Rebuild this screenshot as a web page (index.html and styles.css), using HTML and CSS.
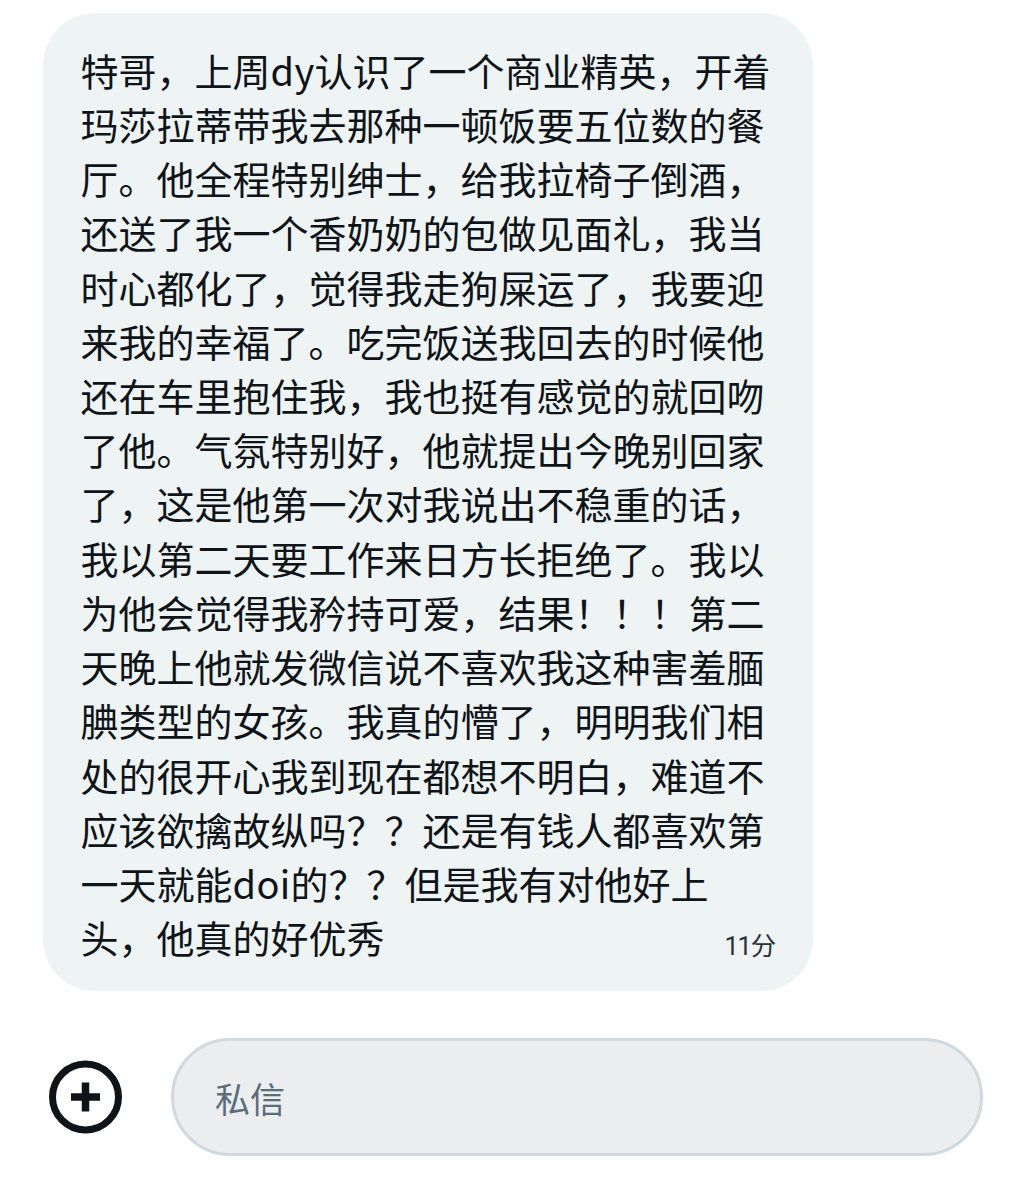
FILE: index.html
```html
<!DOCTYPE html>
<html lang="zh-CN">
<head>
    <meta charset="UTF-8">
    <meta name="viewport" content="width=device-width, initial-scale=1.0">
    <title>私信</title>
    <link rel="stylesheet" href="styles.css">
</head>
<body>
    <div class="chat">
        <div class="message">
            <p class="message-text">
                特哥，上周<span class="latin">dy</span>认识了一个商业精英，开着<br>
                玛莎拉蒂带我去那种一顿饭要五位数的餐<br>
                厅。他全程特别绅士，给我拉椅子倒酒，<br>
                还送了我一个香奶奶的包做见面礼，我当<br>
                时心都化了，觉得我走狗屎运了，我要迎<br>
                来我的幸福了。吃完饭送我回去的时候他<br>
                还在车里抱住我，我也挺有感觉的就回吻<br>
                了他。气氛特别好，他就提出今晚别回家<br>
                了，这是他第一次对我说出不稳重的话，<br>
                我以第二天要工作来日方长拒绝了。我以<br>
                为他会觉得我矜持可爱，结果！！！第二<br>
                天晚上他就发微信说不喜欢我这种害羞腼<br>
                腆类型的女孩。我真的懵了，明明我们相<br>
                处的很开心我到现在都想不明白，难道不<br>
                应该欲擒故纵吗？？还是有钱人都喜欢第<br>
                一天就能<span class="latin">doi</span>的？？但是我有对他好上<br>
                头，他真的好优秀
            </p>
            <span class="message-time">11分</span>
        </div>
        <div class="composer">
            <button class="add-btn" aria-label="添加">
                <svg width="74" height="74" viewBox="0 0 74 74">
                    <circle cx="37.5" cy="37" r="33" fill="none" stroke="#0f1419" stroke-width="7"/>
                    <path d="M37.5 22.5v29M23 37h29" stroke="#0f1419" stroke-width="7.5"/>
                </svg>
            </button>
            <input class="message-input" type="text" placeholder="私信">
        </div>
    </div>
</body>
</html>
```

FILE: styles.css
```css
* {
    box-sizing: border-box;
}
body {
    margin: 0;
    background-color: #fff;
    font-family: "Noto Sans CJK SC", sans-serif;
    color: #0f1419;
}
.chat {
    padding: 13px 35px 0 43px;
}
.message {
    display: flex;
    align-items: flex-end;
    justify-content: space-between;
    width: 770px;
    height: 978px;
    padding: 30px 38px 26.6px 37.5px;
    background-color: #eef3f4;
    border-radius: 52px;
}
.message-text {
    flex: none;
    margin: 0;
    font-size: 38px;
    line-height: 54.22px;
    white-space: nowrap;
}
.latin {
    letter-spacing: 0.3px;
}
.message-time {
    width: 0;
    direction: rtl;
    font-family: Roboto, "Noto Sans CJK SC", sans-serif;
    font-size: 25.5px;
    line-height: 36px;
    letter-spacing: -1.2px;
    white-space: nowrap;
    color: #28323b;
}
.composer {
    display: flex;
    align-items: center;
    gap: 48px;
    margin-top: 47px;
}
.add-btn {
    display: block;
    width: 80px;
    height: 74px;
    padding: 0 0 0 5px;
    border: none;
    background: none;
}
.add-btn svg {
    display: block;
}
.message-input {
    flex: 1;
    min-width: 0;
    height: 118px;
    padding: 0 41px;
    border: 3px solid #d0d9e0;
    border-radius: 59px;
    background-color: #ebedef;
    font-family: inherit;
    font-size: 35px;
}
.message-input::placeholder {
    color: #5b6d7b;
}
```
